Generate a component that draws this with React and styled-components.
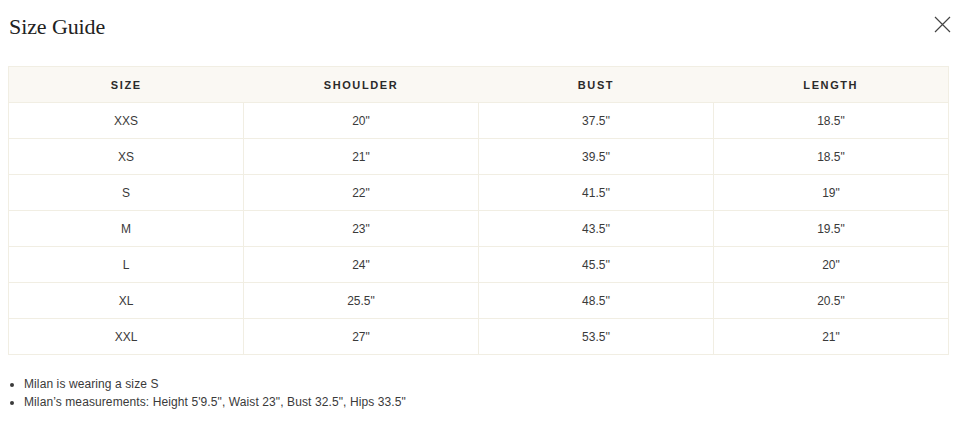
import styled, { createGlobalStyle } from "styled-components";

const GlobalStyle = createGlobalStyle`
    body {
        margin: 0;
        background: #fff;
        font-family: "Liberation Sans", Arial, sans-serif;
        color: #333;
    }
`

const Modal = styled.div`
    padding: 0 8px;
    width: 945px;
`

const Header = styled.div`
    display: flex;
    align-items: center;
    justify-content: space-between;
    height: 54px;
    margin-bottom: 12px;
    & h1 {
        margin: 0;
        padding-left: 1px;
        font-family: "Liberation Serif", "Times New Roman", serif;
        font-weight: 400;
        font-size: 22px;
        color: #222;
        letter-spacing: -0.1px;
    }
`

const CloseButton = styled.button`
    border: 0;
    background: none;
    padding: 0;
    margin-right: 1px;
    margin-top: -6px;
    width: 20px;
    height: 20px;
    cursor: pointer;
    display: flex;
    align-items: center;
    justify-content: center;
`

const Table = styled.table`
    width: 941px;
    border-collapse: collapse;
    table-layout: fixed;
    & th, & td {
        height: 35px;
        padding: 0;
        text-align: center;
        border: 1px solid #f1eee3;
    }
    & thead th {
        background: #faf8f3;
        font-size: 11px;
        font-weight: 700;
        letter-spacing: 1.6px;
        color: #2a2a2a;
        border-left: 0;
        border-right: 0;
    }
    & thead th:first-child { border-left: 1px solid #f1eee3; }
    & thead th:last-child { border-right: 1px solid #f1eee3; }
    & tbody td {
        font-size: 12px;
        color: #3a3a3a;
    }
`

const Notes = styled.ul`
    margin: 20px 0 0;
    padding-left: 16px;
    font-size: 12px;
    letter-spacing: 0.1px;
    color: #3a3a3a;
    & li {
        line-height: 18px;
    }
`

const rows = [
    ["XXS", '20"', "37.5''", '18.5"'],
    ["XS", '21"', "39.5''", '18.5"'],
    ["S", '22"', "41.5''", '19"'],
    ["M", '23"', "43.5''", '19.5"'],
    ["L", '24"', "45.5''", '20"'],
    ["XL", '25.5"', "48.5''", '20.5"'],
    ["XXL", '27"', "53.5''", '21"'],
]

const App = () => {
    return (
        <>
            <GlobalStyle />
            <Modal>
                <Header>
                    <h1>Size Guide</h1>
                    <CloseButton aria-label="Close">
                        <svg width="17" height="17" viewBox="0 0 17 17">
                            <path d="M1 1L16 16M16 1L1 16" stroke="#444" strokeWidth="1.2" fill="none" />
                        </svg>
                    </CloseButton>
                </Header>
                <Table>
                    <thead>
                        <tr>
                            <th>SIZE</th>
                            <th>SHOULDER</th>
                            <th>BUST</th>
                            <th>LENGTH</th>
                        </tr>
                    </thead>
                    <tbody>
                        {rows.map((r, i) => (
                            <tr key={i}>
                                {r.map((c, j) => <td key={j}>{c}</td>)}
                            </tr>
                        ))}
                    </tbody>
                </Table>
                <Notes>
                    <li>Milan is wearing a size S</li>
                    <li>Milan’s measurements: Height 5'9.5", Waist 23", Bust 32.5", Hips 33.5"</li>
                </Notes>
            </Modal>
        </>
    )
}

export default App;
